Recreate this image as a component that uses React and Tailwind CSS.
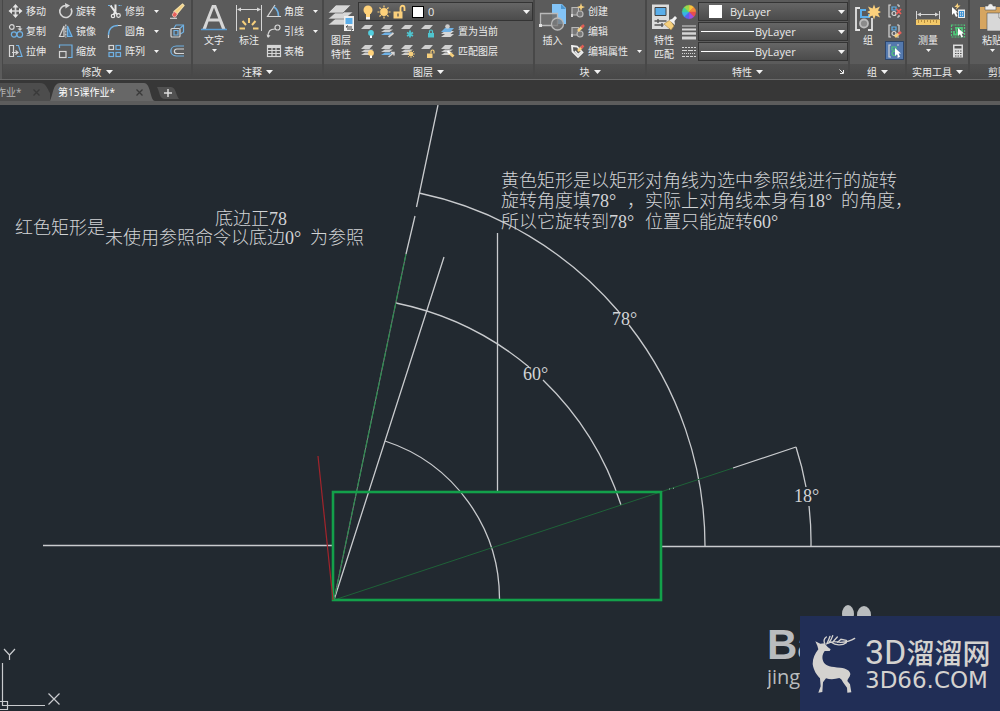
import React from 'react';

const BLUE = '#6fb1e4';
const YELLOW = '#f6cf7c';
const GREY = '#d6d6d6';

/* ---------- small shared pieces ---------- */

const Caret = ({ className = '' }) => (
    <svg viewBox="0 0 7 4" className={`h-1 w-[7px] shrink-0 ${className}`} aria-hidden="true">
        <path d="M0 0h7L3.5 4z" fill="#f2f2f2" />
    </svg>
);

const SmallCaret = ({ className = '' }) => (
    <svg viewBox="0 0 5 3" className={`h-[3px] w-[5px] shrink-0 ${className}`} aria-hidden="true">
        <path d="M0 0h5L2.500 3z" fill="#f2f2f2" />
    </svg>
);

const Icon = ({ children, className = 'size-4' }) => (
    <svg viewBox="0 0 16 16" className={`shrink-0 ${className}`} fill="none" stroke={GREY} strokeWidth="1.2" aria-hidden="true">
        {children}
    </svg>
);

const Tool = ({ icon, label, name, arrow }) => (
    <button type="button" aria-label={name || label} className="flex h-5 items-center gap-0.5 whitespace-nowrap">
        {icon}
        {label && <span>{label}</span>}
        {arrow && <SmallCaret className="ml-[7px]" />}
    </button>
);

const BigTool = ({ icon, lines, arrow, className = 'w-8' }) => (
    <button type="button" className={`flex shrink-0 flex-col items-center leading-[14px] ${className}`}>
        <span className="flex h-8 items-center">{icon}</span>
        {lines.map((line) => (
            <span key={line} className="whitespace-nowrap">{line}</span>
        ))}
        {arrow && <SmallCaret className="mt-0.5" />}
    </button>
);

const Panel = ({ title, children, className = '', launcher, titleClass = 'justify-center' }) => (
    <section className={`flex flex-col border-r-2 border-[#484848] ${className}`}>
        <div className="flex h-16 pt-px">{children}</div>
        <div className={`flex h-[15px] items-center gap-1 bg-linear-to-b from-[#505050] to-[#474747] whitespace-nowrap ${titleClass}`}>
            <span>{title}</span>
            <Caret />
            {launcher && (
                <button type="button" aria-label="特性设置" className="absolute right-1">
                    <svg viewBox="0 0 5 5" className="size-[5px]" stroke="#eee" fill="none">
                        <path d="M0.5 0.5 4 4M4.5 1v3.5H1" />
                    </svg>
                </button>
            )}
        </div>
    </section>
);

const Combo = ({ label, value, options, children, className = '' }) => (
    <label className={`relative flex h-[19px] items-center border border-[#343434] bg-linear-to-b from-[#666] to-[#4b4b4b] ${className}`}>
        {children}
        <select aria-label={label} defaultValue={value} className="h-full min-w-0 flex-1 appearance-none bg-transparent text-[11px] leading-4 outline-none">
            {options.map((o) => (
                <option key={o}>{o}</option>
            ))}
        </select>
        <Caret className="pointer-events-none absolute right-0.5" />
    </label>
);

/* ---------- modify icons ---------- */

const MoveIcon = () => (
    <Icon>
        <path d="M7.500 3v10M2.500 8h10" strokeWidth="1.700" />
        <path d="M7.500 1 10.500 4.500h-6zM7.500 15l-3-3.500h6zM0.500 8 4 5v6zM14.500 8 11 11V5z" fill="#e6e6e6" stroke="none" />
    </Icon>
);
const RotateIcon = () => (
    <Icon>
        <path d="M13 5.500A6 6 0 1 1 8 2.500" strokeWidth="1.600" />
        <path d="M7 0l5 2.500-4.500 3z" fill={GREY} stroke="none" />
    </Icon>
);
const TrimIcon = () => (
    <Icon>
        <path d="M1 2.500h4M11.500 2.500H15" stroke={BLUE} strokeDasharray="2 1" />
        <path d="M3.500 2.500l6.500 9M8.500 1.500V8L6.500 12" stroke="#e8e8e8" strokeWidth="2" />
        <circle cx="6" cy="13" r="1.700" stroke="#e8e8e8" />
        <circle cx="11.500" cy="12.500" r="1.800" stroke="#e8e8e8" />
    </Icon>
);
const EraseIcon = () => (
    <Icon>
        <path d="M13.500 1l1.500 1.500-7 8.500-3-2.500z" fill={YELLOW} stroke="#f3dfa8" />
        <path d="M5.500 8.500l3 2.500-2 3c-1.500.6-3.500-1-3-2.800z" fill="#e8605a" stroke="#f3c6c0" strokeWidth=".8" />
        <path d="M1 15.300h7" />
    </Icon>
);
const CopyIcon = () => (
    <Icon>
        <circle cx="3.800" cy="4" r="2.300" />
        <path d="M8 3.500h4V6" />
        <path d="M9.500 5.500h5l-2.500 2.500z" fill={GREY} stroke="none" />
        <circle cx="6" cy="11.500" r="2.600" stroke={BLUE} />
        <circle cx="11.800" cy="11.500" r="2.800" stroke={BLUE} />
    </Icon>
);
const MirrorIcon = () => (
    <Icon>
        <path d="M6 3v10.500H1.500z" />
        <path d="M7.800 1.500v13" strokeDasharray="2 1" />
        <path d="M9.500 3v10.500H14z" stroke={BLUE} fill="#4479a6" />
    </Icon>
);
const FilletIcon = () => (
    <Icon>
        <path d="M1.500 15v-3M11 2.500h3.500" />
        <path d="M1.500 12C1.500 6 5 2.500 11 2.500" stroke={BLUE} strokeWidth="1.400" />
    </Icon>
);
const ExplodeIcon = () => (
    <Icon>
        <path d="M5 5l2-3h7.500v7l-3 2" stroke={BLUE} />
        <rect x="2" y="5.500" width="9" height="8.500" rx="1" />
        <path d="M5 7.500h4v4.500H5zM11 5.500l3-3" stroke={BLUE} />
    </Icon>
);
const StretchIcon = () => (
    <Icon>
        <path d="M1.500 2.500h4v11h-4z" />
        <path d="M4 9.500h5M7.500 7.500l2.500 2-2.500 2" />
        <path d="M8 2.500h2.500L14 13.500H9" stroke={BLUE} />
    </Icon>
);
const ScaleIcon = () => (
    <Icon>
        <path d="M1.500 5V2h12.500v12.500h-4" stroke={BLUE} />
        <rect x="1.500" y="8.500" width="6.500" height="6" />
    </Icon>
);
const ArrayIcon = () => (
    <Icon>
        <rect x="2" y="2.500" width="4.500" height="4" />
        <rect x="9" y="2.500" width="4.500" height="4" stroke={BLUE} />
        <rect x="2" y="9.500" width="4.500" height="4" stroke={BLUE} />
        <rect x="9" y="9.500" width="4.500" height="4" stroke={BLUE} />
    </Icon>
);
const OffsetIcon = () => (
    <Icon>
        <path d="M15 3H7.500C0 3 0 13 7.500 13H15" stroke={BLUE} />
        <path d="M15 6H8C4.500 6 4.500 10.500 8 10.500h7" />
    </Icon>
);

/* ---------- annotation icons ---------- */

const TextIcon = () => (
    <svg viewBox="0 0 28 30" className="h-[30px] w-7" aria-hidden="true">
        <path d="M2.500 27 12 3h4l9.500 24H22l-2.800-7.500H8.500L6 27zM9.800 16.500h8.500L14 5.500z" fill={GREY} />
        <path d="M1 27.500h26" stroke="#5b9bd0" strokeWidth="1.500" />
    </svg>
);
const DimIcon = () => (
    <svg viewBox="0 0 28 30" className="h-[30px] w-7" fill="none" stroke={GREY} aria-hidden="true">
        <path d="M1.500 3v26M26.500 3v26M3 7.500h22" />
        <path d="M2 7.500l4-2v4zM26 7.500l-4-2v4z" fill={GREY} stroke="none" />
        <path d="M14 16v5M7.500 19l3.500 4M20.500 19 17 23M4.500 26.500H10M18 26.500h5.500" stroke={YELLOW} strokeWidth="2" />
    </svg>
);
const AngleIcon = () => (
    <Icon>
        <path d="M9 2 1.500 13.500H15" />
        <path d="M8 4c3 2 4.500 5 4.500 9" stroke={BLUE} strokeWidth="1.600" />
    </Icon>
);
const LeaderIcon = () => (
    <Icon>
        <path d="M2 14c0-6 2-8 7-8" />
        <circle cx="11.500" cy="4.500" r="2.500" />
        <path d="M0.500 11.500 2 15l2.500-2.500z" fill={GREY} stroke="none" />
    </Icon>
);
const TableIcon = () => (
    <Icon>
        <rect x="1.500" y="2.500" width="13" height="11" />
        <path d="M2 4h12" strokeWidth="2" />
        <path d="M1.500 7.500h13M1.500 10.500h13M6 5v8.500M10 5v8.500" />
    </Icon>
);

/* ---------- layer icons ---------- */

const LayerPropsIcon = () => (
    <svg viewBox="0 0 28 30" className="h-[30px] w-7" aria-hidden="true">
        <g fill={GREY} stroke="#555" strokeWidth=".6">
            <path d="M1 23 9 16h17l-8 7z" />
            <path d="M1 17 9 10h17l-8 7z" />
            <path d="M1 11 9 3h15l-8 8z" />
        </g>
        <path d="M17 14h10v15H17z" fill="#eee" />
        <path d="M18.500 16h7v6h-7z" fill="#5aaeea" />
        <path d="M19 25h6M20 27h5M21 23.500l-2 1.500M24 28.500l2-1.500" stroke="#444" fill="none" />
    </svg>
);
const Stack = ({ blue, many = true }) => (
    <g stroke="none" fill="#cfcfcf">
        {many && <path d="M1 12 5 9.500h8L9.500 12z" fill={blue ? BLUE : '#cfcfcf'} />}
        {many && <path d="M1 9 5 6.500h8L9.500 9z" />}
        <path d="M1 6 5 2h8L9.500 6z" />
    </g>
);
const LayerIcon = ({ blue, many, children }) => (
    <Icon>
        <Stack blue={blue} many={many} />
        {children}
    </Icon>
);
const BulbIcon = () => (
    <Icon>
        <circle cx="8" cy="6" r="4.500" fill="#ffd27a" stroke="none" />
        <path d="M6 9h4v5H6z" fill="#ffd27a" stroke="none" />
        <path d="M6 13h4v2.500H6z" fill="#f3f3f3" stroke="none" />
    </Icon>
);
const SunIcon = () => (
    <Icon>
        <circle cx="8" cy="8" r="3.900" fill="#ffd27a" stroke="none" />
        <path d="M8 1.500v2M8 12.500v2M1.500 8h2M12.500 8h2M3.500 3.500l1.300 1.300M11.200 11.200l1.300 1.300M12.500 3.500l-1.300 1.300M4.800 11.200l-1.300 1.300" stroke="#ffd27a" />
    </Icon>
);
const UnlockIcon = () => (
    <Icon>
        <path d="M1.500 7.500h9V14.500h-9z" fill="#fbd07c" stroke="none" />
        <path d="M8.500 8V4c0-3 4-3 4 0v3" stroke="#ffd27a" strokeWidth="1.800" />
        <path d="M6 9.500v3" stroke="#4a4a4a" />
    </Icon>
);

const layerRows = [
    [
        ['关闭图层', <LayerIcon many={false}><circle cx="11" cy="10" r="2.900" fill="#52cfe0" stroke="none" /><path d="M11 12.500v2.500" stroke="#fff" strokeWidth="2" /></LayerIcon>],
        ['隔离图层', <LayerIcon blue><path d="M8.500 14l5-4" strokeWidth="1.800" /></LayerIcon>],
        ['冻结图层', <LayerIcon many={false}><path d="M10 7.500v7M7 9.500l6 3.500M13 9.500 7 13" stroke="#4fc5cf" strokeWidth="1.800" /></LayerIcon>],
        ['锁定图层', <LayerIcon many={false}><path d="M8 10h6v4.500H8z" fill="#4fc5cf" stroke="none" /><path d="M9.500 10V8.500c0-2 3-2 3 0V10" stroke="#4fc5cf" /></LayerIcon>],
    ],
    [
        ['打开所有图层', <LayerIcon><circle cx="11" cy="10" r="2.900" fill="#ffd27a" stroke="none" /><path d="M11 12.500v2.500" stroke="#fff" strokeWidth="2" /></LayerIcon>],
        ['取消隔离', <LayerIcon blue><path d="M8.500 14l5-4M11 9.500h3v3" strokeWidth="1.400" /></LayerIcon>],
        ['解冻所有图层', <LayerIcon><circle cx="11" cy="11" r="2.200" fill={YELLOW} stroke="none" /><path d="M11 7v8M7 11h8M8 8l6 6M14 8l-6 6" stroke={YELLOW} strokeWidth=".8" /></LayerIcon>],
        ['解锁图层', <LayerIcon many={false}><path d="M7 10.500h5.500v4.500H7z" fill={YELLOW} stroke="none" /><path d="M11 10.500V8.500c0-2 3-2 3 0v2" stroke={YELLOW} /></LayerIcon>],
    ],
];

const SetCurrentIcon = () => (
    <Icon>
        <path d="M1 14 5 11h9l-3.500 3z" fill={GREY} stroke="none" />
        <path d="M1 11 5 8h9l-3.500 3z" fill={GREY} stroke="none" />
        <path d="M1 9 5 5h9l-3.500 4z" fill={BLUE} stroke="none" />
        <circle cx="7.500" cy="3.500" r="2.300" fill="#ccc" stroke="none" />
    </Icon>
);
const MatchLayerIcon = () => (
    <LayerIcon>
        <path d="M9 9.500l4.500 4" stroke={YELLOW} strokeWidth="3" />
        <path d="M7.500 8l2.500 2.500" stroke="#fff" strokeWidth="2" />
    </LayerIcon>
);

/* ---------- block icons ---------- */

const InsertIcon = () => (
    <svg viewBox="0 0 28 30" className="h-[30px] w-7" fill="none" stroke="#b9b9b9" strokeWidth="1.300" aria-hidden="true">
        <path d="M13 2h10l4 4v16H13z" fill="#83c4f7" stroke="none" />
        <path d="M22 2v5h5" fill="#4d97d0" stroke="none" />
        <path d="M1.500 11.500h17v12h-17z" fill="#707070" fillOpacity=".9" />
        <circle cx="18.500" cy="22" r="6" fill="#777" fillOpacity=".75" />
        <path d="M0 22h3v3H0z" fill="#e3e3e3" stroke="none" />
    </svg>
);
const BlockBase = () => (
    <>
        <path d="M2 4.500h6.500V12H2z" fill="#777" stroke="#b9b9b9" />
        <circle cx="10" cy="11" r="3" fill="#777" stroke="#b9b9b9" />
        <path d="M1 11h2v3H1z" fill={GREY} stroke="none" />
    </>
);
const CreateIcon = () => (
    <Icon>
        <BlockBase />
        <path d="M11 0l1 3 3 1-3 1.200-1 3-1-3-3-1.200 3-1z" fill={YELLOW} stroke="none" />
    </Icon>
);
const EditIcon = () => (
    <Icon>
        <BlockBase />
        <path d="M8 8l4.500-4.500" stroke={YELLOW} strokeWidth="2.500" />
        <path d="M11.500 4.500 14 2" stroke="#e05d55" strokeWidth="2.500" />
    </Icon>
);
const AttrIcon = () => (
    <Icon>
        <path d="M2 3l5 .5 5.500 6L8 14 2.500 8.500z" stroke="#eee" strokeWidth="1.800" />
        <path d="M5 8l3 3.500L11 9" stroke="#eee" strokeWidth="1.500" />
        <path d="M8 8l3.500-3.500" stroke={YELLOW} strokeWidth="2.500" />
        <path d="M11 5l2.500-2.500" stroke="#e05d55" strokeWidth="2.500" />
    </Icon>
);

/* ---------- properties icons ---------- */

const MatchPropsIcon = () => (
    <svg viewBox="0 0 28 30" className="h-[30px] w-7" aria-hidden="true">
        <path d="M2 2.500h17V27H2z" fill="#dcdcdc" />
        <path d="M5 5.500h11v8H5z" fill="#5aaeea" stroke="#444" />
        <path d="M4.500 19h12M4.500 23h9M8 17v4M12 21v4" stroke="#555" fill="none" strokeWidth="1.400" />
        <path d="M14 22l6-4 4 6-3 4z" fill={YELLOW} stroke="#a98846" strokeWidth=".6" />
        <path d="M19 18l3-1 3-3 2 2-2.500 3 .5 4z" fill="#f3f3f3" />
    </svg>
);
const wheel = ['#f8c33c', '#f28b3a', '#e64f4f', '#a24de0', '#5a63f0', '#38b3e6', '#3fcf9a', '#9ad84a'];
const ColorWheelIcon = () => (
    <Icon>
        {wheel.map((color, i) => (
            <path key={color} d="M8 8V1.200a6.800 6.800 0 0 1 4.900 2.100z" fill={color} stroke={color} strokeWidth=".4" transform={`rotate(${i * 45} 8 8)`} />
        ))}
    </Icon>
);
const LineweightIcon = () => (
    <Icon>
        <path d="M1 2h14" strokeWidth="1" />
        <path d="M1 5.500h14" strokeWidth="2" />
        <path d="M1 9.500h14" strokeWidth="2.500" />
        <path d="M1 14h14" strokeWidth="3" />
    </Icon>
);
const LinetypeIcon = () => (
    <Icon>
        <path d="M1 3.500h14" strokeDasharray="2 1" />
        <path d="M1 6.500h14" strokeDasharray="5 1" />
        <path d="M1 9.500h14" strokeDasharray="1 1" />
        <path d="M1 12.500h14" strokeDasharray="3 1" />
    </Icon>
);

/* ---------- group / utilities / clipboard icons ---------- */

const GroupIcon = () => (
    <svg viewBox="0 0 28 30" className="h-[30px] w-7" fill="none" stroke="#e3e3e3" strokeWidth="1.800" aria-hidden="true">
        <path d="M6 6H2v22h4M14 28h4V16" />
        <path d="M12 8H7v7h8v-3" stroke="#5aaeea" strokeWidth="2" />
        <circle cx="10" cy="21.500" r="4" fill="#8b8b8b" stroke="#bbb" />
        <path d="M20 2.500l1.500 4 4.500-2-2 4 3 1.500-3 1.500 2 4-4.500-2-1.500 4-1.500-4-4.500 2 2-4-3-1.500 3-1.500-2-4 4.500 2z" fill="#fbd07c" stroke="none" />
    </svg>
);
const GroupBase = ({ color = '#5aaeea' }) => (
    <>
        <path d="M4 2H2v12h2M10 2h2M12 14h-2" />
        <path d="M5 4h4v3H5z" stroke={color} />
        <circle cx="7" cy="10.500" r="2" stroke={color === '#5aaeea' ? GREY : color} />
    </>
);
const UngroupIcon = () => (
    <Icon>
        <GroupBase />
        <path d="M9.500 6l4.500 5M14 6l-4.500 5" stroke="#ec5a55" strokeWidth="1.800" />
        <path d="M12 2v2M12 12v2" />
    </Icon>
);
const GroupEditIcon = () => (
    <Icon>
        <GroupBase />
        <path d="M12 2v7" />
        <path d="M8 14l4-3.500" stroke={YELLOW} strokeWidth="2.800" />
        <path d="M11.500 11 14 9" stroke="#e8605a" strokeWidth="2.800" />
    </Icon>
);
const Cursor = () => <path d="M8 5v8l2-1.800 1.500 3.300 1.500-.7-1.400-3.200H14z" fill="#fff" stroke="none" />;
const GroupSelectIcon = () => (
    <Icon>
        <GroupBase color="#4fc779" />
        <Cursor />
    </Icon>
);
const MeasureIcon = () => (
    <svg viewBox="0 0 26 30" className="h-[30px] w-[26px]" fill="none" stroke={GREY} aria-hidden="true">
        <path d="M1.500 9v8M24.500 9v8M3 12.500h20" />
        <path d="M2 12.500l4-2v4zM24 12.500l-4-2v4z" fill={GREY} stroke="none" />
        <path d="M1 17.500h24V23H1z" fill="#f3c968" stroke="none" />
        <path d="M3.500 18v3M6.500 18v2M9.500 18v3M12.500 18v2M15.500 18v3M18.500 18v2M21.500 18v3" stroke="#b98f3e" />
    </svg>
);
const QuickSelectIcon = () => (
    <Icon>
        <path d="M8 0 4.500 4H7L5.500 7l5-4.500H8z" fill={YELLOW} stroke="none" />
        <path d="M2 4v8l2-2 2 4 1.500-1L6 9.500h2z" fill="#fff" stroke="none" />
        <path d="M8 6.500h7V15H8z" fill="#eee" stroke="none" />
        <path d="M9.500 8.500h4v5h-4zM9.500 11h4M11.500 8.500v5" stroke="#3f93d6" />
    </Icon>
);
const SelectAllIcon = () => (
    <Icon>
        <rect x="1.500" y="2" width="13" height="12" stroke="#4fc779" strokeDasharray="2 1" />
        <path d="M4 8V11.500h4M6 5h6v5H7z" stroke="#4fc779" strokeWidth="1.800" />
        <Cursor />
    </Icon>
);
const CalcIcon = () => (
    <Icon>
        <path d="M3 1.500h10v13H3z" fill="#ddd" stroke="none" />
        <path d="M4.500 3h7v2.500h-7z" fill="#555" stroke="none" />
        <path d="M5 8h6.500M5 10.500h6.500M5 13h6.500" stroke="#555" strokeDasharray="1.500 1" />
    </Icon>
);
const PasteIcon = () => (
    <svg viewBox="0 0 26 30" className="h-[30px] w-[26px]" aria-hidden="true">
        <path d="M1 5h20v22H1z" fill="#d6a560" />
        <path d="M6 4h3c0-3 5-3 5 0h3v4H6z" fill="#eee" stroke="#555" strokeWidth=".6" />
        <path d="M8 11h13l5 5v13H8z" fill="#d8d8d8" stroke="#555" strokeWidth=".6" />
        <path d="M20 11v5h6" fill="#fff" stroke="#555" strokeWidth=".6" />
    </svg>
);

/* ---------- ribbon ---------- */

const Ribbon = () => (
    <header className="flex h-20 overflow-hidden border-b border-[#6a6a6a] bg-[#5b5b5b]">
        <div className="w-[3px] shrink-0 border-r border-[#484848]" />
        <Panel title="修改" className="w-[190px] shrink-0">
            <div className="grid grid-cols-[50px_49px_62px_18px] grid-rows-[20px_20px_20px] pl-[5px]">
                <Tool icon={<MoveIcon />} label="移动" />
                <Tool icon={<RotateIcon />} label="旋转" />
                <Tool icon={<TrimIcon />} label="修剪" arrow />
                <Tool icon={<EraseIcon />} name="删除" />
                <Tool icon={<CopyIcon />} label="复制" />
                <Tool icon={<MirrorIcon />} label="镜像" />
                <Tool icon={<FilletIcon />} label="圆角" arrow />
                <Tool icon={<ExplodeIcon />} name="分解" />
                <Tool icon={<StretchIcon />} label="拉伸" />
                <Tool icon={<ScaleIcon />} label="缩放" />
                <Tool icon={<ArrayIcon />} label="阵列" arrow />
                <Tool icon={<OffsetIcon />} name="偏移" />
            </div>
        </Panel>

        <Panel title="注释" className="w-[131px] shrink-0">
            <BigTool icon={<TextIcon />} lines={['文字']} arrow className="ml-[3px] w-9" />
            <BigTool icon={<DimIcon />} lines={['标注']} className="w-[34px]" />
            <div className="flex flex-col">
                <Tool icon={<AngleIcon />} label="角度" arrow />
                <Tool icon={<LeaderIcon />} label="引线" arrow />
                <Tool icon={<TableIcon />} label="表格" />
            </div>
        </Panel>

        <Panel title="图层" className="w-[211px] shrink-0">
            <BigTool icon={<LayerPropsIcon />} lines={['图层', '特性']} className="w-[34px]" />
            <div className="flex flex-1 flex-col">
                <Combo label="图层" value="0" options={['0']} className="mt-px w-full pl-px">
                    <BulbIcon />
                    <SunIcon />
                    <UnlockIcon />
                    <span className="mx-1 size-3 shrink-0 border border-black bg-white" />
                </Combo>
                {layerRows.map((row, i) => (
                    <div key={i} className="flex gap-1 pl-0.5">
                        {row.map(([name, icon]) => (
                            <Tool key={name} name={name} icon={icon} />
                        ))}
                        <Tool icon={i === 0 ? <SetCurrentIcon /> : <MatchLayerIcon />} label={i === 0 ? '置为当前' : '匹配图层'} />
                    </div>
                ))}
            </div>
        </Panel>

        <Panel title="块" className="w-[112px] shrink-0">
            <BigTool icon={<InsertIcon />} lines={['插入']} className="w-[35px]" />
            <div className="flex flex-col">
                <Tool icon={<CreateIcon />} label="创建" />
                <Tool icon={<EditIcon />} label="编辑" />
                <Tool icon={<AttrIcon />} label="编辑属性" arrow />
            </div>
        </Panel>

        <Panel title="特性" className="relative w-[203px] shrink-0" launcher>
            <BigTool icon={<MatchPropsIcon />} lines={['特性', '匹配']} className="w-[34px]" />
            <div className="flex flex-1 flex-col gap-px pt-px">
                <div className="flex items-center gap-px">
                    <ColorWheelIcon />
                    <Combo label="颜色" value="ByLayer" options={['ByLayer', 'ByBlock']} className="flex-1">
                        <span className="mr-2 ml-2.5 size-[13px] shrink-0 bg-white" />
                    </Combo>
                </div>
                <div className="flex items-center gap-px">
                    <LineweightIcon />
                    <Combo label="线宽" value="ByLayer" options={['ByLayer', 'ByBlock']} className="flex-1">
                        <span className="mr-px ml-0.5 h-px w-[53px] shrink-0 bg-white" />
                    </Combo>
                </div>
                <div className="flex items-center gap-px">
                    <LinetypeIcon />
                    <Combo label="线型" value="ByLayer" options={['ByLayer', 'ByBlock']} className="flex-1">
                        <span className="mr-px ml-0.5 h-px w-[53px] shrink-0 bg-white" />
                    </Combo>
                </div>
            </div>
        </Panel>

        <Panel title="组" className="w-[57px] shrink-0">
            <BigTool icon={<GroupIcon />} lines={['组']} className="ml-px w-[34px]" />
            <div className="flex flex-col items-center">
                <Tool icon={<UngroupIcon />} name="解除编组" />
                <Tool icon={<GroupEditIcon />} name="组编辑" />
                <button type="button" aria-label="启用组选择" className="flex size-[19px] items-center justify-center border border-[#2f4669] bg-[#5479ae]">
                    <GroupSelectIcon />
                </button>
            </div>
        </Panel>

        <Panel title="实用工具" className="w-[63px] shrink-0">
            <BigTool icon={<MeasureIcon />} lines={['测量']} arrow className="ml-[3px] w-9" />
            <div className="ml-1 flex flex-col">
                <Tool icon={<QuickSelectIcon />} name="快速选择" />
                <Tool icon={<SelectAllIcon />} name="全部选择" />
                <Tool icon={<CalcIcon />} name="快速计算器" />
            </div>
        </Panel>

        <Panel title="剪贴板" className="min-w-20 flex-1" titleClass="pl-[18px]">
            <BigTool icon={<PasteIcon />} lines={['粘贴']} arrow className="ml-1 w-9" />
        </Panel>
    </header>
);

/* ---------- file tabs ---------- */

const CloseX = ({ name }) => (
    <button type="button" aria-label={`关闭 ${name}`} className="relative">
        <svg viewBox="0 0 7 7" className="size-[7px]" stroke="#393939" strokeWidth="1.300">
            <path d="M0.500 0.500l6 6M6.500 0.500l-6 6" />
        </svg>
    </button>
);

const FileTabs = () => (
    <nav className="flex h-[21px] items-end overflow-hidden bg-[#373737]">
        <div className="relative flex h-[18px] w-[50px] items-center justify-between pr-2.5 text-[#b5b5b5]">
            <svg viewBox="0 0 50 18" className="absolute inset-0 size-full" preserveAspectRatio="none" aria-hidden="true">
                <path d="M0 0h40c6 0 7 5 10 10v8H0z" fill="#4d4d4d" />
            </svg>
            <button type="button" className="relative -ml-1">作业*</button>
            <CloseX name="作业" />
        </div>
        <div className="relative flex h-[18px] w-[105px] items-center justify-between pr-3 pl-2 text-white">
            <svg viewBox="0 0 105 18" className="absolute inset-0 size-full" preserveAspectRatio="none" aria-hidden="true">
                <path d="M0 18C3 12 3 0 10 0h84c7 0 6 18 11 18z" fill="#676767" />
            </svg>
            <button type="button" className="relative">第15课作业*</button>
            <CloseX name="第15课作业" />
        </div>
        <button type="button" aria-label="新建图形" className="ml-0.5 h-4">
            <svg viewBox="0 0 22 16" className="h-4 w-[22px]">
                <path d="M0 2h14c5 0 5 9 8 12H8C2 14 3 7 0 2z" fill="#515151" />
                <path d="M11 4v8M7 8h8" stroke="#ddd" strokeWidth="1.500" />
            </svg>
        </button>
    </nav>
);

/* ---------- drawing area ---------- */

const Drawing = () => (
    <svg viewBox="0 105 1000 606" className="block w-full" fill="none" role="img" aria-label="旋转参照图形">
        <g stroke="#c9cbce" strokeWidth="1.300">
            <path d="M43 545.500H333M661 546.500H1000M497.500 233V491" />
            <path d="M438 105 416.500 207M415 216 406 254M444 257 334 600M733 468 796 447" />
            {/* 78° */}
            <path d="M419 193A360 360 0 0 1 619 312M629 325A360 360 0 0 1 705 546" />
            {/* 60° */}
            <path d="M396 303A303 303 0 0 1 529 367M543 380A303 303 0 0 1 621 505" />
            {/* 18° */}
            <path d="M796 447A314 314 0 0 1 806 487M809 506A314 314 0 0 1 811 546" />
            <path d="M385 441A166 166 0 0 1 499.500 600" />
            <path d="M669 489h1M673 488h1" />
        </g>
        <path d="M334 600 733 468" stroke="#1f6238" />
        <path d="M406 254 334 600" stroke="#8fa398" strokeWidth=".8" />
        <path d="M406 254 334 600" stroke="#2f8a50" strokeDasharray="8 2" strokeWidth="1.200" />
        <rect x="333" y="492" width="328" height="108" stroke="#13a04a" strokeWidth="2.600" />
        <path d="M318 456 333 600" stroke="#a3242b" strokeWidth="1.200" />

        <g fill="#d2d4d6" className="font-['Liberation_Serif','Noto_Sans_CJK_SC',serif] text-[18px] font-light">
            <text x="15" y="234">红色矩形是</text>
            <text x="215" y="225">底边正78</text>
            <text x="105" y="244">
                未使用参照命令以底边0°
                <tspan x="310">为参照</tspan>
            </text>
            <text x="501" y="187">黄色矩形是以矩形对角线为选中参照线进行的旋转</text>
            <text x="501" y="207">
                旋转角度填78°
                <tspan x="627">，</tspan>
                <tspan x="645">实际上对角线本身有18°</tspan>
                <tspan x="841">的角度，</tspan>
            </text>
            <text x="501" y="228">
                所以它旋转到78°
                <tspan x="645">位置只能旋转60°</tspan>
            </text>
            <text x="612" y="325">78°</text>
            <text x="523" y="380">60°</text>
            <text x="794" y="502">18°</text>
        </g>

        {/* UCS icon */}
        <g stroke="#c9cbce" strokeWidth="1.200">
            <path d="M2.500 663V705.500H45M-1 701.500H7.500V709.500H-1" />
            <path d="M4 649l5.500 6 5.500-6M9.500 655v5M48.500 693.500l11 11M59.500 693.500l-11 11" />
        </g>
    </svg>
);

const Deer = () => (
    <svg viewBox="215 130 135 180" className="h-[60px] w-[45px] shrink-0" aria-hidden="true">
        <path
            d="M225 152L240 159 252 158 262 169 271 176 268 181 253 181C245 192 244 205 251 216 257 225 272 229 300 231 318 233 330 240 330 251 329 260 322 264 321 271L329 281 333 305 321 306 320 291 308 275C305 268 302 264 297 262 284 266 270 267 257 263L248 275 246 304 234 306 236 300 241 287 239 263C229 253 220 240 217 220 217 203 224 188 234 176L231 165Z"
            fill="#d4d2cf"
        />
        <path
            d="M254 160C249 151 251 144 258 139M259 160C265 149 267 143 269 137M262 158C280 148 289 155 300 155 320 154 333 150 343 143M267 154C274 146 275 141 277 135M280 151L291 139M292 155L302 146 318 149M273 155C285 164 305 166 318 156"
            fill="none"
            stroke="#d4d2cf"
            strokeWidth="4"
            strokeLinecap="round"
        />
    </svg>
);

const Watermark = () => (
    <div className="absolute right-0 bottom-0 h-[108px] w-[233px] overflow-hidden font-['Liberation_Sans',sans-serif] text-[#b9bcbe]">
        <svg viewBox="0 0 30 26" className="absolute top-0 left-[74px] h-[26px] w-[30px]" fill="#b9bcbe" aria-hidden="true">
            <ellipse cx="7" cy="11" rx="6" ry="9" />
            <ellipse cx="23" cy="12" rx="7" ry="9" />
        </svg>
        <div className="pt-[22px] text-[42px] leading-10 font-bold">Ba</div>
        <div className="font-['Open_Sans',sans-serif] text-[20px] leading-6 font-medium">jing</div>
        <div className="absolute right-0 bottom-0 flex h-[95px] w-[200px] items-center gap-2 bg-[#212e56] pl-3 text-[#d4d2cf]">
            <Deer />
            <div className="flex flex-col whitespace-nowrap">
                <div className="flex items-center leading-8">
                    <span className="font-['Roboto',sans-serif] text-[34px]">3D</span>
                    <span className="font-['Noto_Sans_CJK_SC',sans-serif] text-[28px] font-medium">溜溜网</span>
                </div>
                <div className="font-['DejaVu_Sans',sans-serif] text-[23px] leading-6">3D66.COM</div>
            </div>
        </div>
    </div>
);

const App = () => (
    <div className="flex min-h-screen flex-col overflow-hidden bg-[#222930] font-['Open_Sans','Noto_Sans_CJK_SC',sans-serif] text-[10px] leading-[14px] text-[#ebebeb]">
        <Ribbon />
        <FileTabs />
        <div className="h-1 bg-[#5c5c5c]" />
        <main className="relative flex-1">
            <Drawing />
            <Watermark />
        </main>
    </div>
);

export default App;
